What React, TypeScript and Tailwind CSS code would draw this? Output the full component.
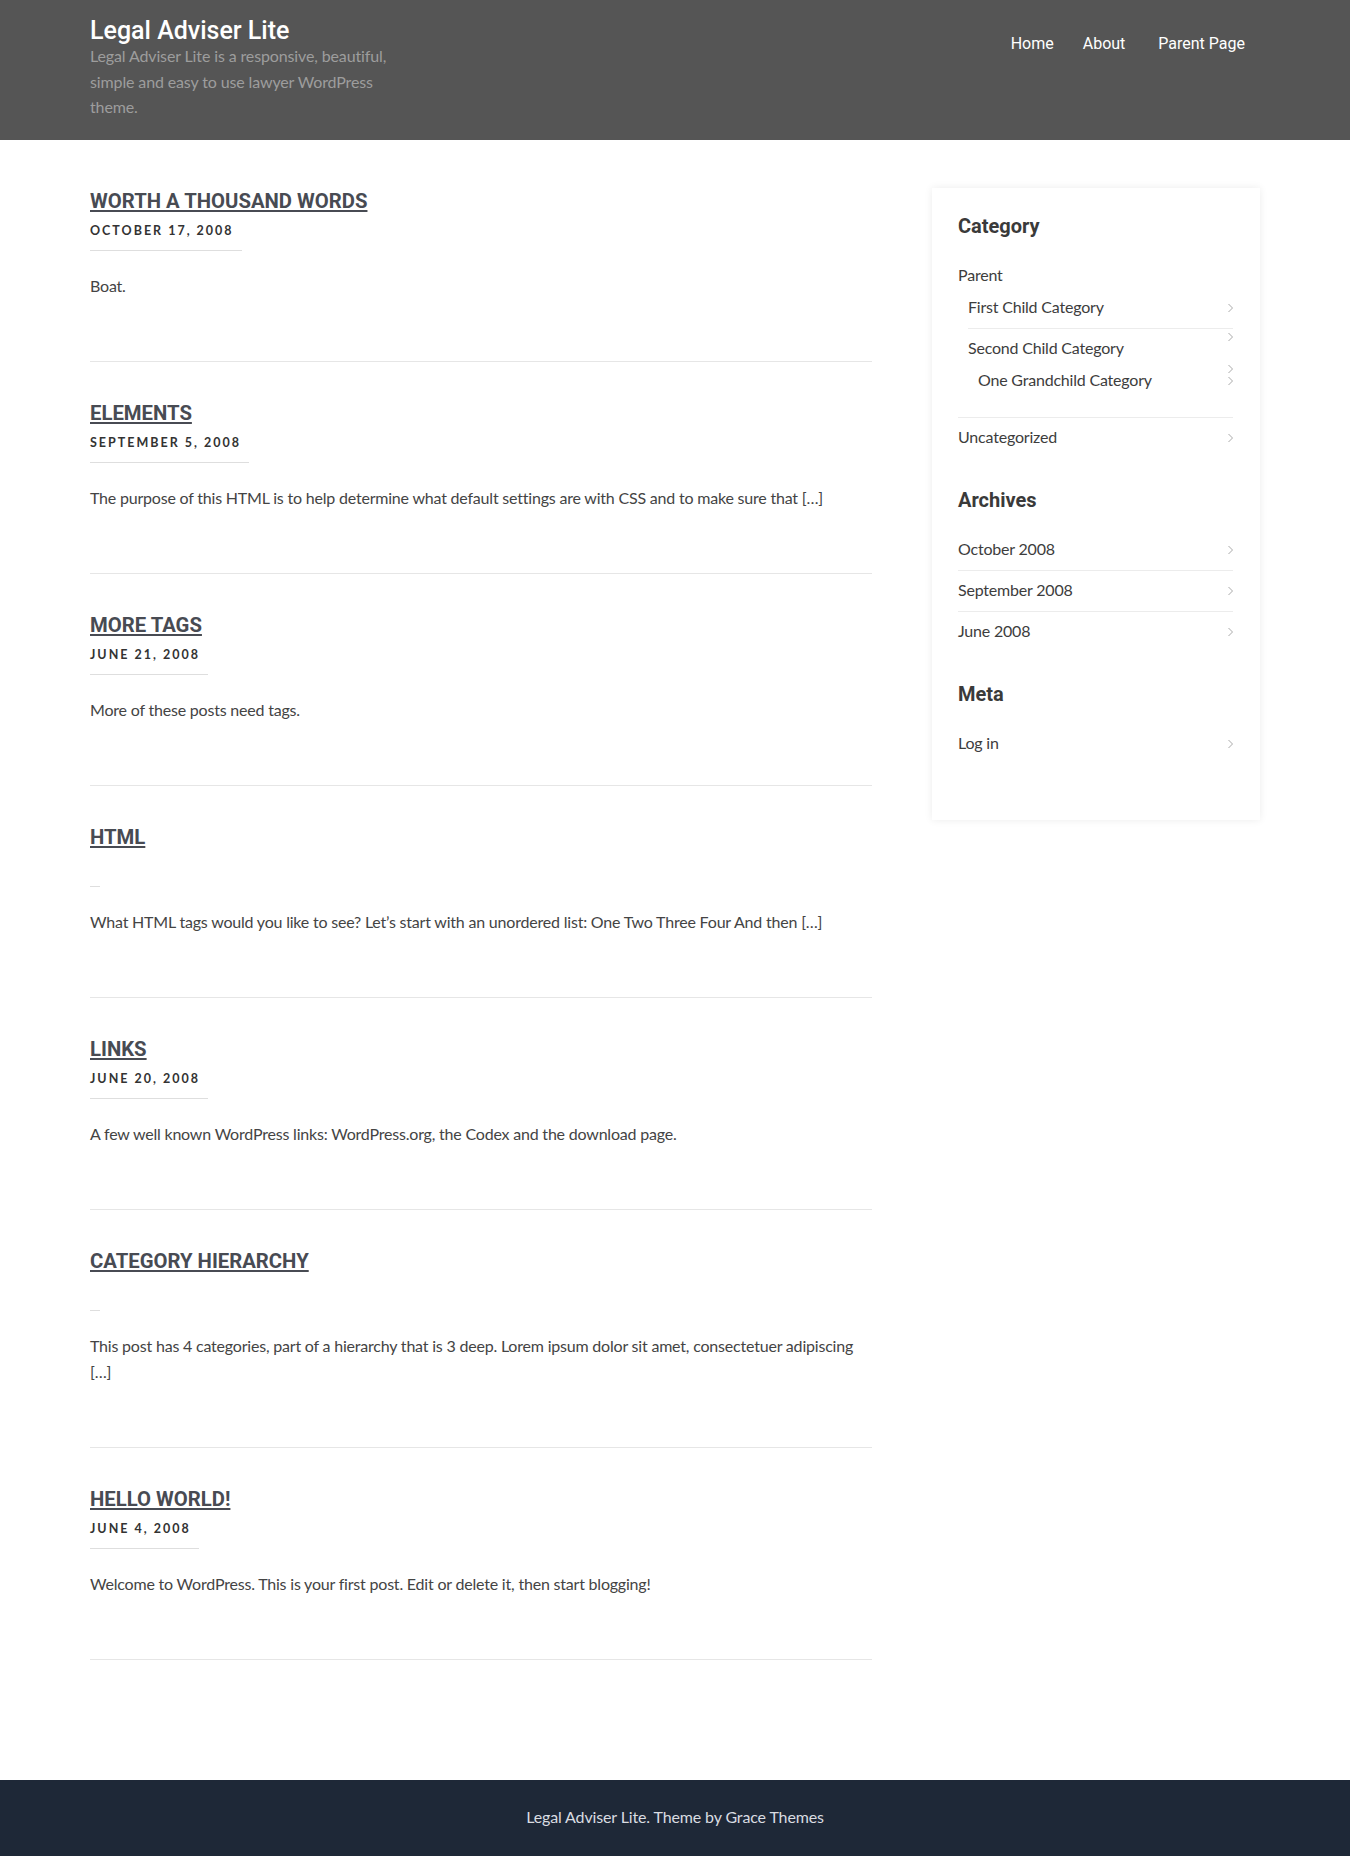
import React from 'react';

type Post = {
    title: string;
    date?: string;
    excerpt: string;
};

type ListItem = {
    label: string;
    children?: ListItem[];
};

const posts: Post[] = [
    { title: 'Worth a Thousand Words', date: 'October 17, 2008', excerpt: 'Boat.' },
    {
        title: 'Elements',
        date: 'September 5, 2008',
        excerpt:
            'The purpose of this HTML is to help determine what default settings are with CSS and to make sure that […]',
    },
    { title: 'More Tags', date: 'June 21, 2008', excerpt: 'More of these posts need tags.' },
    {
        title: 'HTML',
        excerpt:
            'What HTML tags would you like to see? Let’s start with an unordered list: One Two Three Four And then […]',
    },
    {
        title: 'Links',
        date: 'June 20, 2008',
        excerpt: 'A few well known WordPress links: WordPress.org, the Codex and the download page.',
    },
    {
        title: 'Category Hierarchy',
        excerpt:
            'This post has 4 categories, part of a hierarchy that is 3 deep. Lorem ipsum dolor sit amet, consectetuer adipiscing […]',
    },
    {
        title: 'Hello world!',
        date: 'June 4, 2008',
        excerpt: 'Welcome to WordPress. This is your first post. Edit or delete it, then start blogging!',
    },
];

const categories: ListItem[] = [
    {
        label: 'Parent',
        children: [
            { label: 'First Child Category' },
            { label: 'Second Child Category', children: [{ label: 'One Grandchild Category' }] },
        ],
    },
    { label: 'Uncategorized' },
];

const archives: ListItem[] = [{ label: 'October 2008' }, { label: 'September 2008' }, { label: 'June 2008' }];

const meta: ListItem[] = [{ label: 'Log in' }];

const Chevron = () => (
    <svg
        className="absolute right-0 top-1/2 -translate-y-1/2"
        width="5"
        height="9"
        viewBox="0 0 5 9"
        fill="none"
    >
        <path d="M0.5 0.5L4.5 4.5L0.5 8.5" stroke="#a9a9a9" strokeWidth="1" />
    </svg>
);

const WidgetList: React.FC<{ items: ListItem[]; nested?: boolean }> = ({ items, nested }) => (
    <ul className={nested ? 'pl-[10px]' : ''}>
        {items.map((item, i) => (
            <li
                key={item.label}
                className={`relative pt-[6px] pb-[8px] ${
                    i < items.length - 1 ? 'border-b border-[#ececec]' : ''
                }`}
            >
                <Chevron />
                <a href="#" className="block leading-[26px] text-[#3d3d3d]">
                    {item.label}
                </a>
                {item.children && <WidgetList items={item.children} nested />}
            </li>
        ))}
    </ul>
);

const Widget: React.FC<{ title: string; items: ListItem[] }> = ({ title, items }) => (
    <section className="mb-[29px]">
        <h3 className="font-['Roboto',sans-serif] tracking-normal font-bold text-[20px] leading-[26px] text-[#3a3a3a] mb-[17px]">
            {title}
        </h3>
        <WidgetList items={items} />
    </section>
);

const PostEntry: React.FC<{ post: Post; first: boolean }> = ({ post, first }) => (
    <article className={`${first ? '' : 'pt-[38px]'} pb-[62px] border-b border-[#e6e6e6]`}>
        <h2 className="font-['Roboto',sans-serif] tracking-normal font-bold text-[20.3px] leading-[26px] uppercase">
            <a
                href="#"
                className="underline decoration-[2px] underline-offset-[2px] text-[#484b53]"
            >
                {post.title}
            </a>
        </h2>
        {post.date ? (
            <div className="mt-[7px] w-fit h-[30px] pr-[8px] pb-[9px] border-b border-[#dedede] text-[12.5px] font-bold tracking-[2px] uppercase leading-[20px] text-[#333333]">
                {post.date}
            </div>
        ) : (
            <div className="mt-[7px] w-[10px] h-[30px] border-b border-[#dedede]" />
        )}
        <p className="mt-[22px] leading-[26px] text-[#444444]">{post.excerpt}</p>
    </article>
);

export default function App() {
    return (
        <div className="font-['Lato',sans-serif] text-[16px] tracking-[-0.2px] text-[#444444] bg-white">
            <header className="bg-[#555555] h-[140px]">
                <div className="w-[1170px] mx-auto flex justify-between items-start pt-[19px]">
                    <div>
                        <h1 className="font-['Roboto',sans-serif] tracking-normal font-medium text-[25px] leading-[24px] text-white">
                            Legal Adviser Lite
                        </h1>
                        <p className="w-[310px] leading-[25.5px] tracking-[-0.13px] text-[#9d9d9d]">
                            Legal Adviser Lite is a responsive, beautiful, simple and easy to use lawyer
                            WordPress theme.
                        </p>
                    </div>
                    <nav className="flex mt-[15px] pr-[15px] font-['Roboto',sans-serif] tracking-normal text-[16px] leading-[20px] text-white">
                        <a href="#">Home</a>
                        <a href="#" className="ml-[29px]">
                            About
                        </a>
                        <a href="#" className="ml-[33px]">
                            Parent Page
                        </a>
                    </nav>
                </div>
            </header>

            <main className="w-[1170px] mx-auto flex justify-between items-start pt-[48px] pb-[120px]">
                <div className="w-[782px]">
                    {posts.map((post, i) => (
                        <PostEntry key={post.title} post={post} first={i === 0} />
                    ))}
                </div>

                <aside className="w-[328px] bg-white pt-[25px] pl-[26px] pr-[27px] pb-[27px] shadow-[0_0_8px_rgba(0,0,0,0.08)]">
                    <Widget title="Category" items={categories} />
                    <Widget title="Archives" items={archives} />
                    <Widget title="Meta" items={meta} />
                </aside>
            </main>

            <footer className="bg-[#1e2837] h-[76px] pt-[24px] text-center leading-[26px] tracking-[-0.13px] text-[#d9dce1]">
                Legal Adviser Lite. Theme by Grace Themes
            </footer>
        </div>
    );
}
